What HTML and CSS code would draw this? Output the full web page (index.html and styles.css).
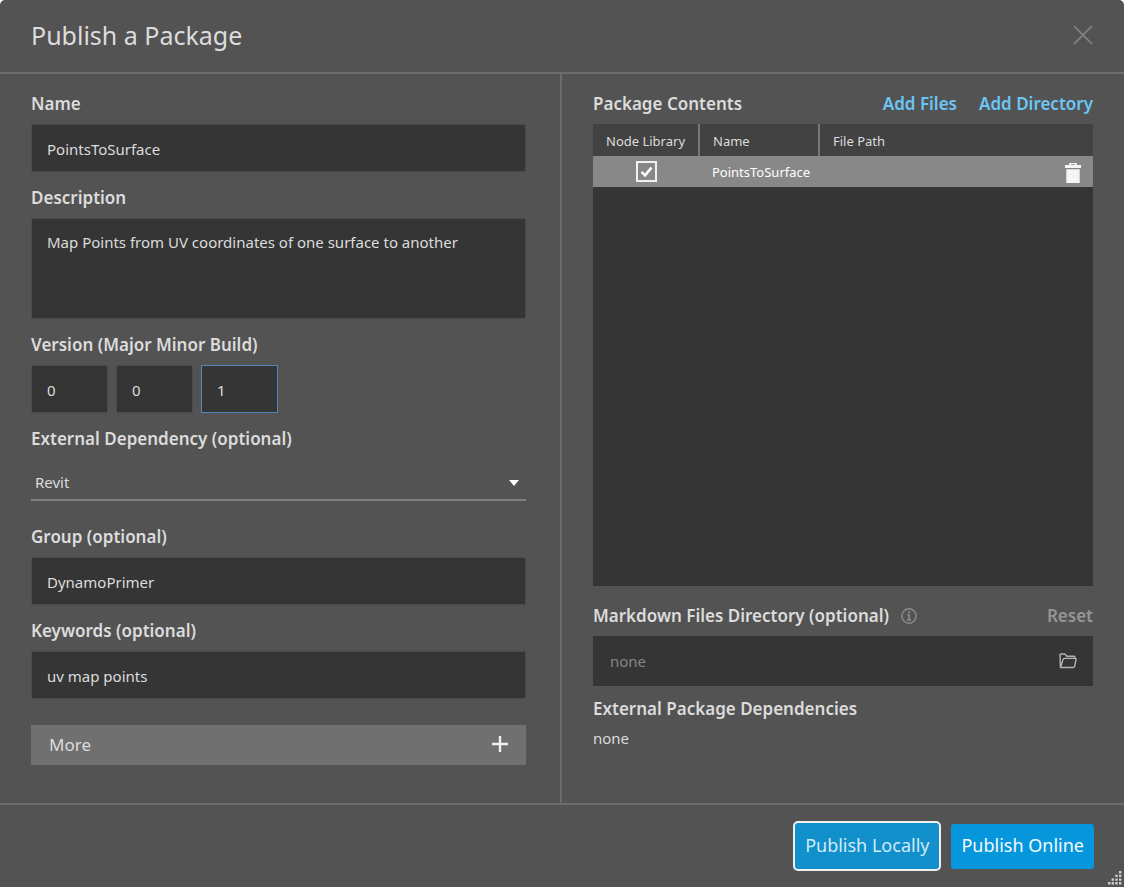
FILE: index.html
```html
<!DOCTYPE html>
<html lang="en">
<head>
<meta charset="utf-8">
<title>Publish a Package</title>
<link rel="stylesheet" href="styles.css">
</head>
<body>
<main class="dialog">
  <header class="dialog-header">
    <h1 class="title">Publish a Package</h1>
    <button class="icon-button" type="button" aria-label="Close">
      <svg width="20" height="20" viewBox="0 0 20 20" fill="none" stroke="#858585" stroke-width="1.7"><path d="M1 1l18 18M19 1L1 19"/></svg>
    </button>
  </header>

  <div class="dialog-body">
    <form class="details">
      <div class="field">
        <label class="label" for="name">Name</label>
        <input class="text-box" id="name" type="text" value="PointsToSurface">
      </div>
      <div class="field">
        <label class="label" for="description">Description</label>
        <textarea class="text-box text-area" id="description">Map Points from UV coordinates of one surface to another</textarea>
      </div>
      <div class="field">
        <label class="label" for="major">Version (Major Minor Build)</label>
        <div class="version">
          <input class="text-box" id="major" type="text" value="0">
          <input class="text-box" type="text" value="0" aria-label="Minor">
          <input class="text-box is-active" type="text" value="1" aria-label="Build">
        </div>
      </div>
      <div class="field field-select">
        <label class="label" for="dependency">External Dependency (optional)</label>
        <div class="select-wrap">
          <select class="select" id="dependency"><option>Revit</option></select>
          <svg class="caret" width="10" height="6" viewBox="0 0 10 6"><path d="M0 0h10L5 6z" fill="#fff"/></svg>
        </div>
      </div>
      <div class="field">
        <label class="label" for="group">Group (optional)</label>
        <input class="text-box" id="group" type="text" value="DynamoPrimer">
      </div>
      <div class="field">
        <label class="label" for="keywords">Keywords (optional)</label>
        <input class="text-box" id="keywords" type="text" value="uv map points">
      </div>
      <button class="more" type="button">
        <span>More</span>
        <svg width="16" height="16" viewBox="0 0 16 16" stroke="#f0f0f0" stroke-width="2.4"><path d="M8 0v16M0 8h16"/></svg>
      </button>
    </form>

    <section class="contents">
      <div class="heading-row">
        <h2 class="label">Package Contents</h2>
        <div class="links">
          <a class="link" href="#files">Add Files</a>
          <a class="link" href="#directory">Add Directory</a>
        </div>
      </div>
      <div class="file-list">
        <table class="files">
          <thead>
            <tr><th class="col-library">Node Library</th><th class="col-name">Name</th><th colspan="2">File Path</th></tr>
          </thead>
          <tbody>
            <tr>
              <td class="cell-check"><input class="check" type="checkbox" checked aria-label="Node library PointsToSurface"></td>
              <td>PointsToSurface</td>
              <td></td>
              <td class="cell-action">
                <button class="icon-button" type="button" aria-label="Delete">
                  <svg width="16" height="20" viewBox="0 0 16 20" fill="#f5f5f5"><path d="M4 2V1Q4 0 5 0h6q1 0 1 1v1h4v3H0V2zm2 0h4V1.2H6zM1.3 6.3h13.4V20H1.3z" fill-rule="evenodd"/></svg>
                </button>
              </td>
            </tr>
          </tbody>
        </table>
      </div>

      <div class="heading-row heading-markdown">
        <label class="label" for="markdown">Markdown Files Directory (optional)</label>
        <svg class="info" width="16" height="16" viewBox="0 0 16 16" fill="none" stroke="#8c8c8c"><circle cx="8" cy="8" r="7.2" stroke-width="1.4"/><path d="M8 3.2v2M6.3 7H8v5M6 12h4" stroke-width="1.6"/></svg>
        <button class="reset" type="button">Reset</button>
      </div>
      <div class="path-box">
        <input class="path-input" id="markdown" type="text" placeholder="none">
        <button class="icon-button" type="button" aria-label="Browse">
          <svg width="18" height="16" viewBox="0 0 18 16" fill="none" stroke="#b4b4b4" stroke-width="1.4" stroke-linejoin="round"><path d="M1.4 14.3L1 2.2Q1 1 2.2 1h3.6l2 2.2h7Q16 3.2 16 4.4v1M1.6 14.5L4 6.4Q4.3 5.4 5.3 5.4h11q1 0 .8 1l-1.6 7.2q-.2.9-1.2.9z"/></svg>
        </button>
      </div>
      <h2 class="label heading-deps">External Package Dependencies</h2>
      <p class="deps">none</p>
    </section>
  </div>

  <footer class="dialog-footer">
    <button class="action action-local" type="button">Publish Locally</button>
    <button class="action" type="button">Publish Online</button>
    <svg class="grip" width="14" height="14" viewBox="0 0 14 14" fill="#d0d0d0"><path d="M11 0h2.4v2.4H11zM11 3.7h2.4v2.4H11zM11 7.4h2.4v2.4H11zM11 11.1h2.4v2.4H11zM7.3 3.7h2.4v2.4H7.3zM7.3 7.4h2.4v2.4H7.3zM7.3 11.1h2.4v2.4H7.3zM3.6 7.4H6v2.4H3.6zM3.6 11.1H6v2.4H3.6zM0 11.1h2.4v2.4H0z"/></svg>
  </footer>
</main>
</body>
</html>
```
FILE: styles.css
```css
* { box-sizing: border-box; }

body {
  margin: 0;
  background: #fff;
  color: #dcdcdc;
  font-family: "Noto Sans", "Open Sans", sans-serif;
  font-size: 15px;
}

button, input, textarea, select { font: inherit; color: inherit; border-radius: 0; }
button { cursor: pointer; }
h1, h2, p { margin: 0; }

.dialog {
  display: flex;
  flex-direction: column;
  min-height: 100vh;
  background: #535353;
  border-radius: 5px 5px 0 0;
}

.dialog-header {
  display: flex;
  align-items: center;
  justify-content: space-between;
  height: 74px;
  padding: 0 31px 2px;
  border-bottom: 2px solid #6c6c6c;
}

.title { font-size: 25px; font-weight: 400; line-height: 32px; }

.icon-button {
  display: flex;
  padding: 0;
  border: 0;
  background: none;
}

.dialog-body {
  flex: 1;
  display: grid;
  grid-template-columns: 1fr 1fr;
}

.details {
  display: flex;
  flex-direction: column;
  gap: 14px;
  padding: 18px 34px 38px 31px;
  border-right: 2px solid #6c6c6c;
}

.field { display: flex; flex-direction: column; gap: 8px; }
.field-select { margin-bottom: 10px; }

.label {
  font-size: 17px;
  font-weight: 600;
  line-height: 24px;
}

.text-box {
  width: 100%;
  height: 48px;
  padding: 2px 15px 0;
  border: 1px solid #4b4b4b;
  outline: 0;
  background: #353535;
}

.text-area {
  display: block;
  height: 101px;
  padding-top: 13px;
  line-height: 20px;
  resize: none;
}

.version {
  display: grid;
  grid-template-columns: repeat(3, 77px);
  gap: 8px;
}

.is-active { border-color: #5585bd; }

.select-wrap { position: relative; }

.select {
  display: block;
  width: 100%;
  height: 42px;
  padding: 6px 4px 0;
  border: 0;
  border-bottom: 2px solid #808080;
  outline: 0;
  background: none;
  appearance: none;
}

.caret { position: absolute; right: 7px; top: 21px; }

.more {
  display: flex;
  align-items: center;
  justify-content: space-between;
  height: 40px;
  margin-top: 12px;
  padding: 0 18px 2px;
  border: 0;
  background: #707070;
  font-size: 17px;
}

.contents {
  display: flex;
  flex-direction: column;
  padding: 18px 31px 54px;
}

.heading-row { display: flex; align-items: center; }
.links { display: flex; gap: 22px; margin-left: auto; }

.link {
  color: #6cc6f5;
  font-size: 17px;
  font-weight: 600;
  line-height: 24px;
  text-decoration: none;
}

.file-list {
  flex: 1;
  margin-top: 8px;
  background: #353535;
}

.files {
  width: 100%;
  border-collapse: collapse;
  table-layout: fixed;
  font-size: 13px;
}

.files th {
  height: 32px;
  padding: 2px 13px 0;
  background: #424242;
  font-weight: 400;
  text-align: left;
}

.files th + th { border-left: 2px solid #767676; }
.col-library { width: 106px; }
.col-name { width: 120px; }

.files td {
  height: 31px;
  padding: 0 13px;
  background: #888;
  color: #fff;
}

.files .cell-check { text-align: center; }
.files .cell-action { padding: 2px 12px 0 0; }
.cell-action .icon-button { margin-left: auto; }

.check {
  display: block;
  width: 21px;
  height: 21px;
  margin: 0 auto;
  border: 2px solid #f2f2f2;
  background: url("data:image/svg+xml,%3Csvg xmlns='http://www.w3.org/2000/svg' viewBox='0 0 17 17'%3E%3Cpath d='M3.5 8.8l3.6 3.6 6.4-7.8' fill='none' stroke='%23fff' stroke-width='2.6'/%3E%3C/svg%3E") center / 17px no-repeat;
  appearance: none;
}

.heading-markdown { margin-top: 18px; }
.info { margin-left: 12px; }

.reset {
  margin-left: auto;
  padding: 0;
  border: 0;
  background: none;
  color: #959595;
  font-size: 17px;
  font-weight: 600;
  line-height: 24px;
}

.path-box {
  display: flex;
  align-items: center;
  height: 50px;
  margin-top: 8px;
  padding: 0 16px 0 17px;
  background: #353535;
}

.path-input {
  flex: 1;
  min-width: 0;
  padding: 0;
  border: 0;
  outline: 0;
  background: none;
}

.path-input::placeholder { color: #858585; opacity: 1; }

.heading-deps { margin-top: 11px; }
.deps { margin-top: 6px; line-height: 22px; }

.dialog-footer {
  position: relative;
  display: flex;
  align-items: center;
  justify-content: flex-end;
  gap: 10px;
  height: 84px;
  padding: 0 30px 0 31px;
  border-top: 2px solid #6c6c6c;
}

.action {
  height: 45px;
  padding: 0 10px 2px;
  border: 0;
  border-radius: 3px;
  background: #0696dc;
  color: #f4faff;
  font-size: 18px;
}

.action-local {
  height: 50px;
  border: 2px solid #f0f0f0;
  border-radius: 5px;
  background: #1190cb;
  color: #d3eaf7;
}

.grip { position: absolute; right: 2px; bottom: 2px; }
```
